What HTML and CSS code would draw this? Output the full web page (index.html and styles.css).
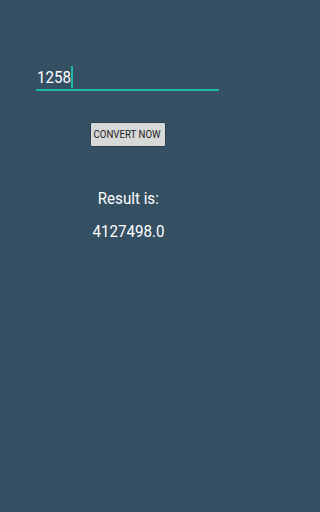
FILE: index.html
```html
<!DOCTYPE html>
<html>
<head>
<meta charset="utf-8">
<link rel="stylesheet" href="styles.css">
</head>
<body>
<div class="screen">
  <div class="field">
    <span class="value">1258</span><span class="cursor"></span>
  </div>
  <div class="btn-row">
    <div class="btn"><span class="btn-text">CONVERT NOW</span></div>
  </div>
  <div class="label"><span class="squish">Result is:</span></div>
  <div class="result"><span class="squish">4127498.0</span></div>
</div>
</body>
</html>
```
FILE: styles.css
```css
html, body {
  margin: 0;
  padding: 0;
  background: #354f63;
}
.screen {
  width: 256px;
  height: 512px;
  background: #354f63;
  font-family: Roboto, "Noto Sans", sans-serif;
  color: #ffffff;
  display: flex;
  flex-direction: column;
  padding-top: 66px;
  box-sizing: border-box;
}
.field {
  margin: 0 37px 0 36px;
  height: 23px;
  border-bottom: 2px solid #1fb5a8;
  display: flex;
  align-items: flex-start;
  padding-left: 1px;
}
.value {
  display: inline-block;
  font-size: 17px;
  line-height: 22px;
  color: #ffffff;
  transform: scaleX(0.89);
  transform-origin: left center;
  margin-right: -4px;
}
.cursor {
  width: 2px;
  height: 22px;
  background: #1fb5a8;
  margin-left: 0;
}
.btn-row {
  display: flex;
  justify-content: center;
  margin-top: 31px;
  padding-right: 1px;
}
.btn {
  width: 76px;
  height: 25px;
  box-sizing: border-box;
  background: #d7d8d8;
  color: #1e1e1e;
  border: 1px solid #2b3f4f;
  border-radius: 2px;
  display: flex;
  justify-content: center;
  align-items: center;
}
.btn-text {
  display: inline-block;
  font-size: 10.4px;
  font-weight: 400;
  line-height: 12px;
  white-space: nowrap;
  transform: scaleX(0.93);
  margin-top: 1px;
}
.squish {
  display: inline-block;
  transform: scaleX(0.89);
}
.label {
  text-align: center;
  font-size: 17px;
  line-height: 20px;
  margin-top: 41px;
}
.result {
  text-align: center;
  font-size: 17px;
  line-height: 20px;
  margin-top: 13px;
}
```
